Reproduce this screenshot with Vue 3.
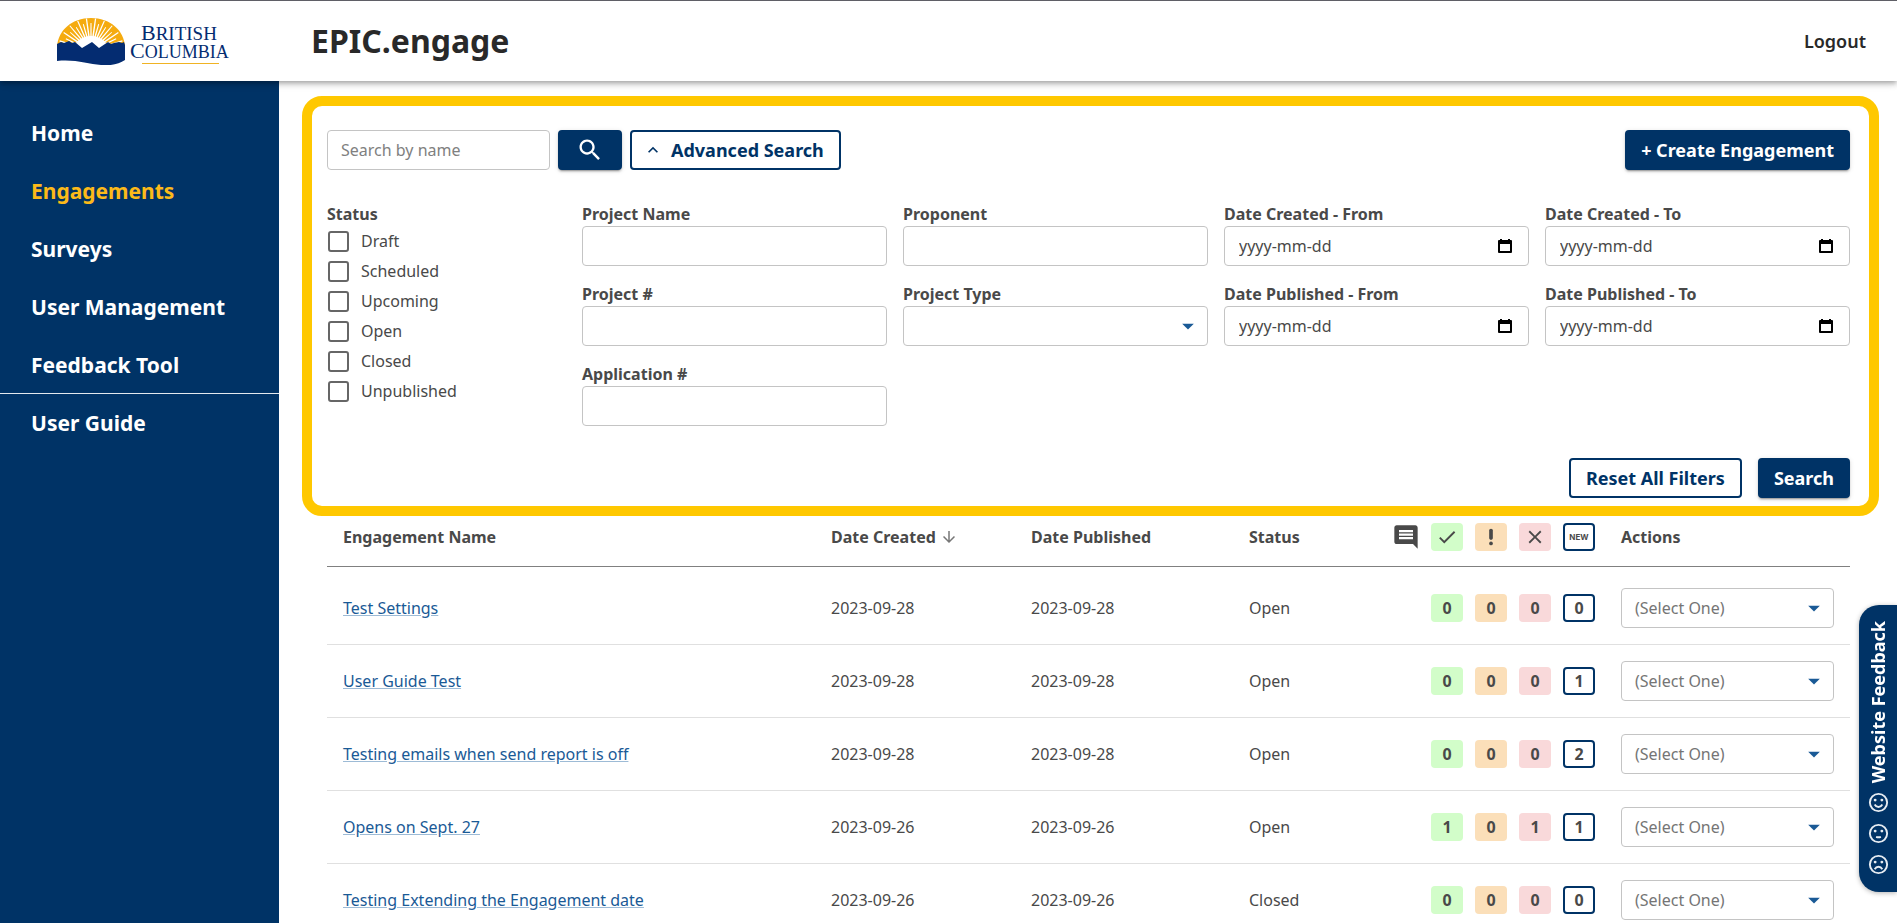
<script setup>
import { ref } from 'vue'

const nav = [
  { label: 'Home' },
  { label: 'Engagements', active: true },
  { label: 'Surveys' },
  { label: 'User Management' },
  { label: 'Feedback Tool', divider: true },
  { label: 'User Guide' },
]

const statuses = ref(
  ['Draft', 'Scheduled', 'Upcoming', 'Open', 'Closed', 'Unpublished'].map((label) => ({ label, checked: false })),
)

const fields = [
  { id: 'project-name', label: 'Project Name', kind: 'text' },
  { id: 'proponent', label: 'Proponent', kind: 'text' },
  { id: 'created-from', label: 'Date Created - From', kind: 'date' },
  { id: 'created-to', label: 'Date Created - To', kind: 'date' },
  { id: 'project-number', label: 'Project #', kind: 'text' },
  { id: 'project-type', label: 'Project Type', kind: 'select' },
  { id: 'published-from', label: 'Date Published - From', kind: 'date' },
  { id: 'published-to', label: 'Date Published - To', kind: 'date' },
  { id: 'application-number', label: 'Application #', kind: 'text' },
]

const tones = ['green', 'orange', 'pink', 'outlined']

const rows = [
  { name: 'Test Settings', created: '2023-09-28', published: '2023-09-28', status: 'Open', counts: [0, 0, 0, 0] },
  { name: 'User Guide Test', created: '2023-09-28', published: '2023-09-28', status: 'Open', counts: [0, 0, 0, 1] },
  { name: 'Testing emails when send report is off', created: '2023-09-28', published: '2023-09-28', status: 'Open', counts: [0, 0, 0, 2] },
  { name: 'Opens on Sept. 27', created: '2023-09-26', published: '2023-09-26', status: 'Open', counts: [1, 0, 1, 1] },
  { name: 'Testing Extending the Engagement date', created: '2023-09-26', published: '2023-09-26', status: 'Closed', counts: [0, 0, 0, 0] },
]

// Sun rays fan out from a point behind the mountains.
const rays = Array.from({ length: 21 }, (_, i) => {
  const point = (deg, r) => {
    const a = (deg * Math.PI) / 180
    return `${(34 + r * Math.cos(a)).toFixed(1)} ${(34 - r * Math.sin(a)).toFixed(1)}`
  }
  const deg = 10 + i * 8
  const reach = i % 2 ? 33 : 28
  return `M${point(deg - 3, 14)}L${point(deg - 1, reach)}L${point(deg + 1, reach)}L${point(deg + 3, 14)}Z`
}).join('')
</script>

<template>
  <div class="page">
    <header class="topbar">
      <a class="brand" href="#" aria-label="British Columbia">
        <svg width="176" height="48" viewBox="0 0 176 48">
          <clipPath id="sun-clip"><path d="M0 30C1 13 15 1 34 1s33 12 34 29z" /></clipPath>
          <path d="M0 30C1 13 15 1 34 1s33 12 34 29z" fill="#f5ab0f" />
          <g clip-path="url(#sun-clip)">
            <path :d="rays" fill="#fff" />
            <ellipse cx="34" cy="34" rx="18" ry="15" fill="#fff" />
          </g>
          <path d="M0 27l4-2 3 1 5-2 3 2 3-1 7 6 10-6 7 6 9-6 3 2 3-1 5-1 3 1 2-1 1 3v15c-6 4-14 6-24 5C31 47 18 42 0 44q-1-9 0-17z" fill="#042c71" />
          <g fill="#042c71" font-family="'Liberation Serif', serif">
            <text x="84" y="23" font-size="22">B<tspan font-size="19">RITISH</tspan></text>
            <text x="73" y="41" font-size="22">C<tspan font-size="18">OLUMBIA</tspan></text>
          </g>
          <path d="M85 46h77v1H85z" fill="#f0b323" />
        </svg>
      </a>
      <h1>EPIC.engage</h1>
      <button class="logout" type="button">Logout</button>
    </header>

    <div class="body">
      <nav class="sidebar">
        <a v-for="item in nav" :key="item.label" href="#" :class="{ active: item.active, divider: item.divider }">{{ item.label }}</a>
      </nav>

      <main>
        <form class="filters" @submit.prevent>
          <div class="bar">
            <input class="control search" type="text" placeholder="Search by name" aria-label="Search by name" />
            <button class="btn primary icon" type="button" aria-label="Search by name">
              <svg width="28" height="28" viewBox="0 0 24 24"><path d="M15.5 14h-.79l-.28-.27C15.41 12.59 16 11.11 16 9.5 16 5.91 13.09 3 9.5 3S3 5.91 3 9.5 5.91 16 9.5 16c1.61 0 3.09-.59 4.23-1.57l.27.28v.79l5 4.99L20.49 19l-4.99-5zm-6 0C7.01 14 5 11.99 5 9.5S7.01 5 9.5 5 14 7.01 14 9.5 11.99 14 9.5 14z" /></svg>
            </button>
            <button class="btn secondary toggle" type="button" aria-expanded="true">
              <svg width="20" height="20" viewBox="0 0 24 24"><path d="m12 8-6 6 1.41 1.41L12 10.83l4.59 4.58L18 14z" /></svg>
              Advanced Search
            </button>
            <button class="btn primary create" type="button">+ Create Engagement</button>
          </div>

          <div class="advanced">
            <fieldset class="statuses">
              <legend>Status</legend>
              <label v-for="s in statuses" :key="s.label"><input v-model="s.checked" type="checkbox" />{{ s.label }}</label>
            </fieldset>
            <div class="fields">
              <div v-for="f in fields" :key="f.id" class="field">
                <label :for="f.id">{{ f.label }}</label>
                <input v-if="f.kind === 'text'" :id="f.id" class="control" type="text" />
                <div v-else-if="f.kind === 'date'" class="affix">
                  <input :id="f.id" class="control date" type="text" placeholder="yyyy-mm-dd" />
                  <svg class="calendar" width="14" height="16" viewBox="0 0 14 16"><path d="M2 1h2v1h6V1h2v1h1q1 0 1 1v11q0 1-1 1H1q-1 0-1-1V3q0-1 1-1h1zM2 6v7h10V6z" fill-rule="evenodd" /></svg>
                </div>
                <div v-else class="affix">
                  <select :id="f.id" class="control"><option></option></select>
                  <svg class="caret" width="28" height="28" viewBox="0 0 24 24"><path d="m7 10 5 5 5-5z" /></svg>
                </div>
              </div>
            </div>
          </div>

          <div class="submit">
            <button class="btn secondary" type="reset">Reset All Filters</button>
            <button class="btn primary" type="submit">Search</button>
          </div>
        </form>

        <table>
          <colgroup>
            <col />
            <col class="c-created" />
            <col class="c-published" />
            <col class="c-status" />
            <col class="c-comment" />
            <col v-for="t in tones" :key="t" class="c-count" />
            <col class="c-actions" />
          </colgroup>
          <thead>
            <tr>
              <th>Engagement Name</th>
              <th>
                <span class="sorted">Date Created<svg width="18" height="18" viewBox="0 0 24 24"><path d="m20 12-1.41-1.41L13 16.17V4h-2v12.17l-5.58-5.59L4 12l8 8z" /></svg></span>
              </th>
              <th>Date Published</th>
              <th>Status</th>
              <th class="comment" aria-label="Comments">
                <svg width="28" height="28" viewBox="0 0 24 24"><path d="M21.99 4c0-1.1-.89-2-1.99-2H4c-1.1 0-2 .9-2 2v12c0 1.1.9 2 2 2h14l4 4zM18 14H6v-2h12zm0-3H6V9h12zm0-3H6V6h12z" /></svg>
              </th>
              <th class="count" aria-label="Approved">
                <span class="badge green"><svg width="22" height="22" viewBox="0 0 24 24"><path d="M9 16.17 4.83 12l-1.42 1.41L9 19 21 7l-1.41-1.41z" /></svg></span>
              </th>
              <th class="count" aria-label="Needs review">
                <span class="badge orange"><svg width="22" height="22" viewBox="0 0 24 24"><circle cx="12" cy="19" r="2" /><path d="M12 3c-1.1 0-2 .9-2 2v8c0 1.1.9 2 2 2s2-.9 2-2V5c0-1.1-.9-2-2-2z" /></svg></span>
              </th>
              <th class="count" aria-label="Rejected">
                <span class="badge pink"><svg width="22" height="22" viewBox="0 0 24 24"><path d="M19 6.41 17.59 5 12 10.59 6.41 5 5 6.41 10.59 12 5 17.59 6.41 19 12 13.41 17.59 19 19 17.59 13.41 12z" /></svg></span>
              </th>
              <th class="count"><span class="badge outlined new">NEW</span></th>
              <th class="actions">Actions</th>
            </tr>
          </thead>
          <tbody>
            <tr v-for="row in rows" :key="row.name">
              <td><a href="#">{{ row.name }}</a></td>
              <td>{{ row.created }}</td>
              <td>{{ row.published }}</td>
              <td>{{ row.status }}</td>
              <td></td>
              <td v-for="(n, i) in row.counts" :key="i" class="count"><span class="badge" :class="tones[i]">{{ n }}</span></td>
              <td class="actions">
                <div class="affix">
                  <select class="control muted" :aria-label="'Actions for ' + row.name"><option>(Select One)</option></select>
                  <svg class="caret" width="28" height="28" viewBox="0 0 24 24"><path d="m7 10 5 5 5-5z" /></svg>
                </div>
              </td>
            </tr>
          </tbody>
        </table>
      </main>
    </div>

    <button class="feedback" type="button">
      <span>Website Feedback</span>
      <svg width="23" height="23" viewBox="0 0 24 24"><circle cx="12" cy="12" r="9" /><path d="M8 14c2 3.500 6 3.500 8 0" /><circle class="eye" cx="8.500" cy="9.500" r="1.500" /><circle class="eye" cx="15.500" cy="9.500" r="1.500" /></svg>
      <svg width="23" height="23" viewBox="0 0 24 24"><circle cx="12" cy="12" r="9" /><path d="M9.500 15.500q2.500 1 5 0" /><circle class="eye" cx="8.500" cy="9.500" r="1.500" /><circle class="eye" cx="15.500" cy="9.500" r="1.500" /></svg>
      <svg width="23" height="23" viewBox="0 0 24 24"><circle cx="12" cy="12" r="9" /><path d="M8 17c2-3.500 6-3.500 8 0" /><circle class="eye" cx="8.500" cy="9.500" r="1.500" /><circle class="eye" cx="15.500" cy="9.500" r="1.500" /></svg>
    </button>
  </div>
</template>

<style>
body {
  margin: 0;
}
</style>

<style scoped>
* {
  box-sizing: border-box;
}
.page {
  display: flex;
  flex-direction: column;
  height: 100vh;
  overflow: hidden;
  background: #fff;
  color: #494949;
  font: 16px/24px 'Noto Sans', sans-serif;
}
button,
input,
select {
  font: inherit;
  color: inherit;
}
svg {
  display: block;
  fill: currentColor;
}
.topbar {
  position: relative;
  z-index: 1;
  flex: none;
  display: flex;
  align-items: center;
  height: 81px;
  padding: 0 31px 0 57px;
  border-top: 1px solid #5f5f66;
  background: #fff;
  box-shadow: 0 2px 4px -1px rgba(0, 0, 0, 0.2), 0 4px 5px rgba(0, 0, 0, 0.14), 0 1px 10px rgba(0, 0, 0, 0.12);
}
.brand {
  flex: none;
  width: 254px;
}
h1 {
  margin: 0;
  color: #292929;
  font-size: 32px;
  line-height: 40px;
}
.logout {
  margin-left: auto;
  padding: 0;
  border: 0;
  background: none;
  color: #292929;
  font-size: 18px;
  font-weight: 600;
}
.body {
  flex: 1;
  display: flex;
  min-height: 0;
}
.sidebar {
  flex: none;
  width: 279px;
  padding-top: 23px;
  background: #036;
}
.sidebar a {
  display: flex;
  align-items: center;
  height: 58px;
  padding-left: 31px;
  color: #fff;
  font-size: 21px;
  font-weight: 700;
  text-decoration: none;
}
.sidebar .active {
  color: #fcba19;
}
.sidebar .divider {
  border-bottom: 1px solid #e4e9ee;
}
main {
  flex: 1;
  min-width: 0;
  padding: 15px 18px 0 23px;
}
.filters {
  padding: 24px 19px 8px 15px;
  border: 10px solid #ffc800;
  border-radius: 20px;
}
.bar,
.submit {
  display: flex;
  gap: 8px;
}
.btn {
  display: flex;
  align-items: center;
  justify-content: center;
  height: 40px;
  padding: 0 14px;
  border: 2px solid #036;
  border-radius: 4px;
  font-size: 18px;
  font-weight: 700;
  white-space: nowrap;
}
.primary {
  background: #036;
  color: #fff;
  box-shadow: 0 3px 1px -2px rgba(0, 0, 0, 0.2), 0 2px 2px rgba(0, 0, 0, 0.14), 0 1px 5px rgba(0, 0, 0, 0.12);
}
.secondary {
  padding: 0 15px;
  background: #fff;
  color: #036;
}
.icon {
  width: 64px;
}
.toggle {
  gap: 8px;
  padding-left: 11px;
}
.create {
  margin-left: auto;
}
.control {
  display: block;
  width: 100%;
  height: 40px;
  padding: 0 13px;
  border: 1px solid #c4c4c4;
  border-radius: 4px;
  outline: 0;
  background: #fff;
  appearance: none;
}
.control::placeholder {
  color: #808080;
  opacity: 1;
}
.date {
  padding-left: 14px;
}
.date::placeholder {
  color: #494949;
}
.search {
  width: 223px;
}
.advanced {
  display: flex;
  gap: 16px;
  margin-top: 32px;
}
.statuses {
  flex: none;
  width: 239px;
  margin: 0;
  padding: 0;
  border: 0;
}
legend,
.field label,
th {
  padding: 0;
  font-weight: 700;
}
.statuses label {
  display: flex;
  align-items: center;
  gap: 12px;
  height: 30px;
  padding-left: 1px;
}
.statuses input {
  width: 21px;
  height: 21px;
  margin: 0;
  border: 2px solid #666;
  border-radius: 3px;
  background: #fff;
  appearance: none;
}
.statuses input:checked {
  background: #036;
}
.fields {
  flex: 1;
  display: grid;
  grid-template-columns: repeat(4, 1fr);
  gap: 16px;
}
.field label {
  display: block;
}
.affix {
  position: relative;
}
.affix svg {
  position: absolute;
  pointer-events: none;
}
.caret {
  top: 6px;
  right: 6px;
  color: #1a5a96;
}
.calendar {
  top: 12px;
  right: 17px;
  color: #000;
}
.submit {
  gap: 16px;
  justify-content: flex-end;
  margin-top: 32px;
}
table {
  width: calc(100% - 54px);
  margin-left: 25px;
  border-collapse: separate;
  border-spacing: 0;
  table-layout: fixed;
}
.c-created {
  width: 200px;
}
.c-published {
  width: 218px;
}
.c-status {
  width: 145px;
}
.c-comment {
  width: 47px;
}
.c-count {
  width: 44px;
}
.c-actions {
  width: 249px;
}
th {
  height: 51px;
  padding: 6px 16px 15px;
  border-bottom: 1px solid #808080;
  text-align: left;
  white-space: nowrap;
}
td {
  height: 73px;
  padding: 0 16px;
  border-bottom: 1px solid #e0e0e0;
}
tbody::before {
  content: '';
  display: table-row;
  height: 5px;
}
.sorted {
  display: flex;
  align-items: center;
  gap: 4px;
}
.sorted svg {
  color: #777;
}
th.comment {
  padding-left: 14px;
  padding-right: 0;
}
.count {
  padding-left: 6px;
  padding-right: 6px;
}
td.actions,
th.actions {
  padding-left: 20px;
}
td a {
  color: #1a5a96;
  text-decoration-color: #9dbbd6;
}
.badge {
  display: flex;
  align-items: center;
  justify-content: center;
  width: 32px;
  height: 28px;
  border-radius: 4px;
  font-weight: 700;
}
.green {
  background: #d2fdc9;
}
.orange {
  background: #fbdfb9;
}
.pink {
  background: #f9d9da;
}
.outlined {
  border: 2px solid #036;
  background: #fff;
}
.new {
  font: 700 8px/8px Inter, sans-serif;
}
.muted {
  color: #757575;
}
.feedback {
  position: fixed;
  top: 605px;
  right: 0;
  z-index: 2;
  display: flex;
  flex-direction: column;
  align-items: center;
  gap: 8px;
  width: 38px;
  padding: 16px 0;
  border: 0;
  border-radius: 20px 0 0 20px;
  background: #036;
  color: #fff;
  box-shadow: 0 1px 5px rgba(0, 0, 0, 0.3);
  font-size: 18px;
  font-weight: 700;
}
.feedback span {
  writing-mode: vertical-rl;
  transform: rotate(180deg);
}
.feedback svg {
  fill: none;
  stroke: #e6ecf2;
  stroke-width: 2;
}
.feedback .eye {
  fill: #e6ecf2;
  stroke: none;
}
</style>
